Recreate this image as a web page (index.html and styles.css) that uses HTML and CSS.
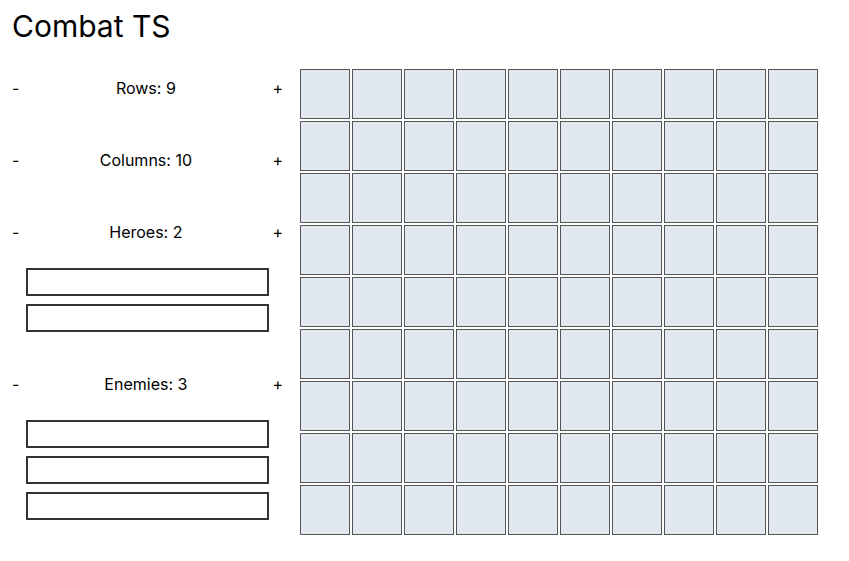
FILE: index.html
```html
<!DOCTYPE html>
<html lang="en">
<head>
<meta charset="utf-8">
<title>Combat TS</title>
<link rel="stylesheet" href="styles.css">
</head>
<body>
<div class="app">
  <h1 class="title">Combat TS</h1>
  <div class="main">
    <div class="panel">
      <div class="section">
        <div class="counter">
          <button class="btn">-</button>
          <span class="label">Rows: 9</span>
          <button class="btn">+</button>
        </div>
        <ul class="list"></ul>
      </div>
      <div class="section">
        <div class="counter">
          <button class="btn">-</button>
          <span class="label">Columns: 10</span>
          <button class="btn">+</button>
        </div>
        <ul class="list"></ul>
      </div>
      <div class="section">
        <div class="counter">
          <button class="btn">-</button>
          <span class="label">Heroes: 2</span>
          <button class="btn">+</button>
        </div>
        <ul class="list">
          <li><input class="name" type="text"></li>
          <li><input class="name" type="text"></li>
        </ul>
      </div>
      <div class="section">
        <div class="counter">
          <button class="btn">-</button>
          <span class="label">Enemies: 3</span>
          <button class="btn">+</button>
        </div>
        <ul class="list">
          <li><input class="name" type="text"></li>
          <li><input class="name" type="text"></li>
          <li><input class="name" type="text"></li>
        </ul>
      </div>
    </div>
    <div class="board" id="board">
      <div class="cell"></div><div class="cell"></div><div class="cell"></div><div class="cell"></div><div class="cell"></div><div class="cell"></div><div class="cell"></div><div class="cell"></div><div class="cell"></div><div class="cell"></div>
      <div class="cell"></div><div class="cell"></div><div class="cell"></div><div class="cell"></div><div class="cell"></div><div class="cell"></div><div class="cell"></div><div class="cell"></div><div class="cell"></div><div class="cell"></div>
      <div class="cell"></div><div class="cell"></div><div class="cell"></div><div class="cell"></div><div class="cell"></div><div class="cell"></div><div class="cell"></div><div class="cell"></div><div class="cell"></div><div class="cell"></div>
      <div class="cell"></div><div class="cell"></div><div class="cell"></div><div class="cell"></div><div class="cell"></div><div class="cell"></div><div class="cell"></div><div class="cell"></div><div class="cell"></div><div class="cell"></div>
      <div class="cell"></div><div class="cell"></div><div class="cell"></div><div class="cell"></div><div class="cell"></div><div class="cell"></div><div class="cell"></div><div class="cell"></div><div class="cell"></div><div class="cell"></div>
      <div class="cell"></div><div class="cell"></div><div class="cell"></div><div class="cell"></div><div class="cell"></div><div class="cell"></div><div class="cell"></div><div class="cell"></div><div class="cell"></div><div class="cell"></div>
      <div class="cell"></div><div class="cell"></div><div class="cell"></div><div class="cell"></div><div class="cell"></div><div class="cell"></div><div class="cell"></div><div class="cell"></div><div class="cell"></div><div class="cell"></div>
      <div class="cell"></div><div class="cell"></div><div class="cell"></div><div class="cell"></div><div class="cell"></div><div class="cell"></div><div class="cell"></div><div class="cell"></div><div class="cell"></div><div class="cell"></div>
      <div class="cell"></div><div class="cell"></div><div class="cell"></div><div class="cell"></div><div class="cell"></div><div class="cell"></div><div class="cell"></div><div class="cell"></div><div class="cell"></div><div class="cell"></div>
    </div>
  </div>
</div>
</body>
</html>
```

FILE: styles.css
```css
* {
  box-sizing: border-box;
}

html, body {
  margin: 0;
  padding: 0;
  background: #ffffff;
}

body {
  font-family: Inter, "Noto Sans", sans-serif;
  color: #000000;
}

.app {
  padding: 8px 12px;
}

.title {
  margin: 0 0 24px;
  font-size: 30px;
  line-height: 36px;
  font-weight: 400;
}

.main {
  display: flex;
  align-items: flex-start;
  gap: 16px;
}

.panel {
  width: 271px;
  display: flex;
  flex-direction: column;
  gap: 16px;
}

.section {
  display: block;
}

.counter {
  height: 40px;
  display: flex;
  align-items: center;
  justify-content: space-between;
  font-size: 16px;
  line-height: 20px;
}

.btn {
  background: none;
  border: none;
  padding: 0;
  margin: 0;
  font-family: Inter, "Noto Sans", sans-serif;
  font-size: 16px;
  line-height: 20px;
  color: #000000;
  cursor: pointer;
}

.label {
  text-align: center;
}

.list {
  list-style: none;
  margin: 16px 0;
  padding: 0 14px;
}

.list li + li {
  margin-top: 8px;
}

.name {
  display: block;
  width: 100%;
  height: 28px;
  margin: 0;
  padding: 0 4px;
  border: 2px solid #333333;
  border-radius: 0;
  background: #ffffff;
  font-family: Inter, "Noto Sans", sans-serif;
  font-size: 14px;
}

.board {
  display: grid;
  grid-template-columns: repeat(10, 50px);
  grid-auto-rows: 50px;
  gap: 2px;
  padding: 1px;
}

.cell {
  width: 50px;
  height: 50px;
  background: #e2e8f0;
  border: 1px solid #555555;
}
```
